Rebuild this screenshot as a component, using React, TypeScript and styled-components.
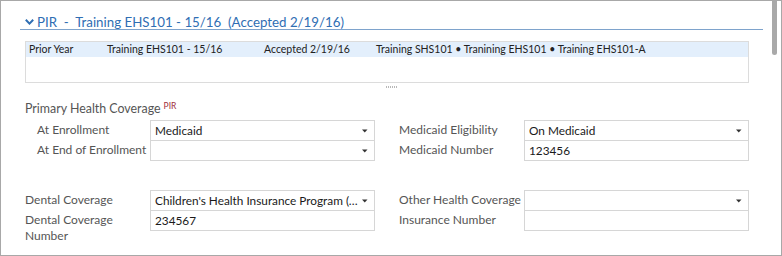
import React from 'react';
import styled, { createGlobalStyle } from 'styled-components';

const GlobalStyle = createGlobalStyle`
  html, body {
    margin: 0;
    padding: 0;
    background: #ffffff;
  }
  body {
    font-family: Lato, 'Open Sans', sans-serif;
  }
  * {
    box-sizing: border-box;
  }
`;

const Frame = styled.div`
  width: 782px;
  height: 256px;
  border: 1px solid #a8a8a8;
  display: flex;
  flex-direction: row;
  overflow: hidden;
  background: #fff;
`;

const Content = styled.div`
  flex: 1;
  padding: 8px 7px 0 19px;
`;

const ScrollTrack = styled.div`
  width: 11px;
  padding-left: 2px;
`;

const Thumb = styled.div`
  width: 5px;
  height: 54px;
  background: #a9a9a9;
  border-radius: 0 0 3px 3px;
`;

const SectionHeader = styled.div`
  display: flex;
  align-items: center;
  height: 21px;
  padding: 5px 0 0 5px;
  border-bottom: 1.5px solid #7ea3cc;
  color: #2f6eb3;
  font-size: 13.3px;
  white-space: pre;

  svg {
    margin-right: 3px;
  }
`;

const Summary = styled.div`
  margin: 11px 14px 0 5px;
  height: 42px;
  border: 1px solid #dcdcdc;
  font-size: 10.5px;
  color: #222;
`;

const SummaryRow = styled.div<{ $selected?: boolean }>`
  display: grid;
  grid-template-columns: 78px 157px 112px 1fr;
  height: 15px;
  line-height: 15px;
  padding-left: 3px;
  background: ${(p) => (p.$selected ? '#e3effc' : 'transparent')};
`;

const Grip = styled.div`
  margin: 3px auto 0;
  width: 11px;
  height: 2px;
  border-top: 1px dotted #b8b8b8;
  border-bottom: 1px dotted #b8b8b8;
`;

const Group = styled.div<{ $top: number }>`
  padding-left: 5px;
  margin-top: ${(p) => p.$top}px;
`;

const GroupTitle = styled.div`
  font-size: 12.4px;
  color: #555;
  height: 19px;

  sup {
    color: #a0303d;
    font-size: 8.5px;
    margin-left: 3px;
    vertical-align: 4px;
  }
`;

const Columns = styled.div`
  display: grid;
  grid-template-columns: 350px 350px;
  column-gap: 24px;
`;

const FieldStack = styled.div`
  display: flex;
  flex-direction: column;
`;

const FieldRow = styled.div`
  display: flex;
  align-items: flex-start;
  & + & {
    margin-top: -1px;
  }
`;

const Label = styled.div<{ $indent?: boolean }>`
  width: 125px;
  flex: none;
  padding-left: ${(p) => (p.$indent ? '12px' : '0')};
  padding-top: 2px;
  font-size: 12px;
  line-height: 16px;
  color: #555;
`;

const Control = styled.div`
  width: 225px;
  height: 21px;
  border: 1px solid #d6d6d6;
  display: flex;
  align-items: center;
  padding: 0 6px 0 4px;
  font-size: 11.8px;
  color: #1a1a1a;
  background: #fff;

  span {
    flex: 1;
    overflow: hidden;
    white-space: nowrap;
    text-overflow: ellipsis;
  }
`;

const Caret = () => (
  <svg width="6" height="4" viewBox="0 0 6 4">
    <path d="M0 0.5h5.5L2.75 3.5z" fill="#333" />
  </svg>
);

const Chevron = () => (
  <svg width="9" height="6" viewBox="0 0 9 6">
    <path d="M0.8 0.8L4.5 4.6L8.2 0.8" fill="none" stroke="#2f6eb3" strokeWidth="2" />
  </svg>
);

interface FieldProps {
  label: string;
  value?: string;
  select?: boolean;
  indent?: boolean;
}

const Field: React.FC<FieldProps> = ({ label, value, select, indent }) => (
  <FieldRow>
    <Label $indent={indent}>{label}</Label>
    <Control>
      <span>{value}</span>
      {select && <Caret />}
    </Control>
  </FieldRow>
);

const App: React.FC = () => {
  return (
    <>
      <GlobalStyle />
      <Frame>
        <Content>
          <SectionHeader>
            <Chevron />
            {'PIR  -  Training EHS101 - 15/16  (Accepted 2/19/16)'}
          </SectionHeader>
          <Summary>
            <SummaryRow $selected>
              <span>Prior Year</span>
              <span>Training EHS101 - 15/16</span>
              <span>Accepted 2/19/16</span>
              <span>Training SHS101 • Tranining EHS101 • Training EHS101-A</span>
            </SummaryRow>
          </Summary>
          <Grip />
          <Group $top={13}>
            <GroupTitle>
              Primary Health Coverage<sup>PIR</sup>
            </GroupTitle>
            <Columns>
              <FieldStack>
                <Field label="At Enrollment" value="Medicaid" select indent />
                <Field label="At End of Enrollment" select indent />
              </FieldStack>
              <FieldStack>
                <Field label="Medicaid Eligibility" value="On Medicaid" select />
                <Field label="Medicaid Number" value="123456" />
              </FieldStack>
            </Columns>
          </Group>
          <Group $top={29}>
            <Columns>
              <FieldStack>
                <Field label="Dental Coverage" value="Children's Health Insurance Program (CHIP)" select />
                <Field label="Dental Coverage Number" value="234567" />
              </FieldStack>
              <FieldStack>
                <Field label="Other Health Coverage" select />
                <Field label="Insurance Number" />
              </FieldStack>
            </Columns>
          </Group>
        </Content>
        <ScrollTrack>
          <Thumb />
        </ScrollTrack>
      </Frame>
    </>
  );
};

export default App;
